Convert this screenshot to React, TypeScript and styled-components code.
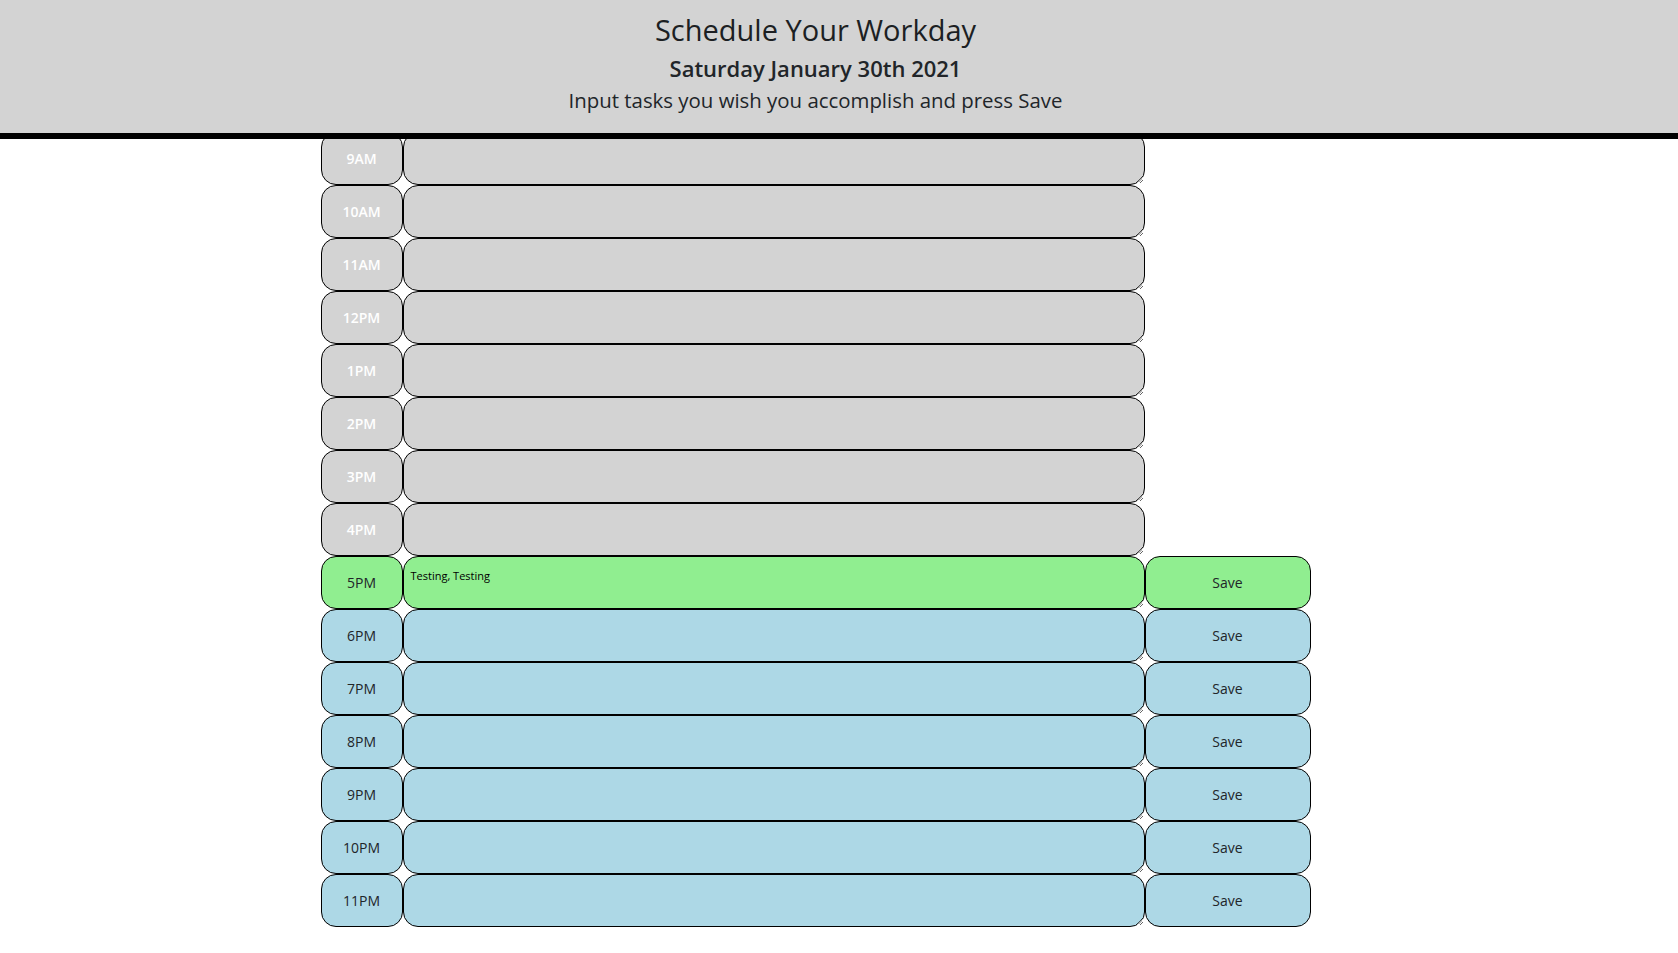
import React from "react";
import styled, { createGlobalStyle } from "styled-components";

const GlobalStyle = createGlobalStyle`
  html, body { margin: 0; padding: 0; background: #ffffff; }
  body {
    font-family: "Open Sans", "Noto Sans", sans-serif;
    color: #212529;
  }
  * { box-sizing: border-box; }
`;

const Header = styled.header`
  position: relative;
  z-index: 2;
  background: #d3d3d3;
  border-bottom: 6px solid #000;
  padding: 12px 47px 20px 0;
  text-align: center;
`;

const Title = styled.h1`
  margin: 0;
  font-size: 29px;
  line-height: 36px;
  font-weight: 400;
  color: #1c1f23;
`;

const DateLine = styled.p`
  margin: 6px 0 0;
  font-size: 22px;
  line-height: 28px;
  font-weight: 600;
`;

const Lead = styled.p`
  margin: 5px 0 0;
  font-size: 20.4px;
  line-height: 26px;
  font-weight: 400;
`;

const Body = styled.div`
  padding-right: 47px;
`;

const Main = styled.main`
  width: 990px;
  margin: -7px auto 0;
  position: relative;
  z-index: 1;
`;

type Tense = "past" | "present" | "future";

const palette: Record<Tense, string> = {
  past: "#d3d3d3",
  present: "#90ee90",
  future: "#add8e6",
};

const Row = styled.div`
  display: grid;
  grid-template-columns: 82px 742px 166px;
  height: 53px;
`;

const Hour = styled.div<{ $tense: Tense }>`
  display: flex;
  align-items: center;
  justify-content: center;
  background: ${(p) => palette[p.$tense]};
  border: 1px solid #000;
  border-radius: 15px;
  font-size: 14px;
  font-weight: ${(p) => (p.$tense === "past" ? 600 : 400)};
  color: ${(p) => (p.$tense === "past" ? "#ffffff" : "#212529")};
`;

const Task = styled.textarea<{ $tense: Tense }>`
  display: block;
  width: 100%;
  height: 100%;
  margin: 0;
  background: ${(p) => palette[p.$tense]};
  border: 1px solid #000;
  border-radius: 15px;
  padding: 11px 7px 3px;
  font-family: "Open Sans", "Noto Sans", sans-serif;
  font-size: 11px;
  line-height: 16px;
  color: #000;
  outline: none;
`;

const SaveBtn = styled.button<{ $tense: Tense }>`
  background: ${(p) => palette[p.$tense]};
  border: 1px solid #000;
  border-radius: 15px;
  font-family: "Open Sans", "Noto Sans", sans-serif;
  font-size: 14px;
  color: #212529;
  cursor: pointer;
  padding: 0;
`;

const hours = [
  "9AM", "10AM", "11AM", "12PM", "1PM", "2PM", "3PM", "4PM",
  "5PM", "6PM", "7PM", "8PM", "9PM", "10PM", "11PM",
];
const currentIndex = 8;

export default function App() {
  return (
    <>
      <GlobalStyle />
      <Header>
        <Title>Schedule Your Workday</Title>
        <DateLine>Saturday January 30th 2021</DateLine>
        <Lead>Input tasks you wish you accomplish and press Save</Lead>
      </Header>
      <Body>
        <Main>
          {hours.map((h, i) => {
            const tense: Tense =
              i < currentIndex ? "past" : i === currentIndex ? "present" : "future";
            return (
              <Row key={h}>
                <Hour $tense={tense}>{h}</Hour>
                <Task
                  $tense={tense}
                  defaultValue={i === currentIndex ? "Testing, Testing" : ""}
                />
                {tense !== "past" ? <SaveBtn $tense={tense}>Save</SaveBtn> : <span />}
              </Row>
            );
          })}
        </Main>
      </Body>
    </>
  );
}
